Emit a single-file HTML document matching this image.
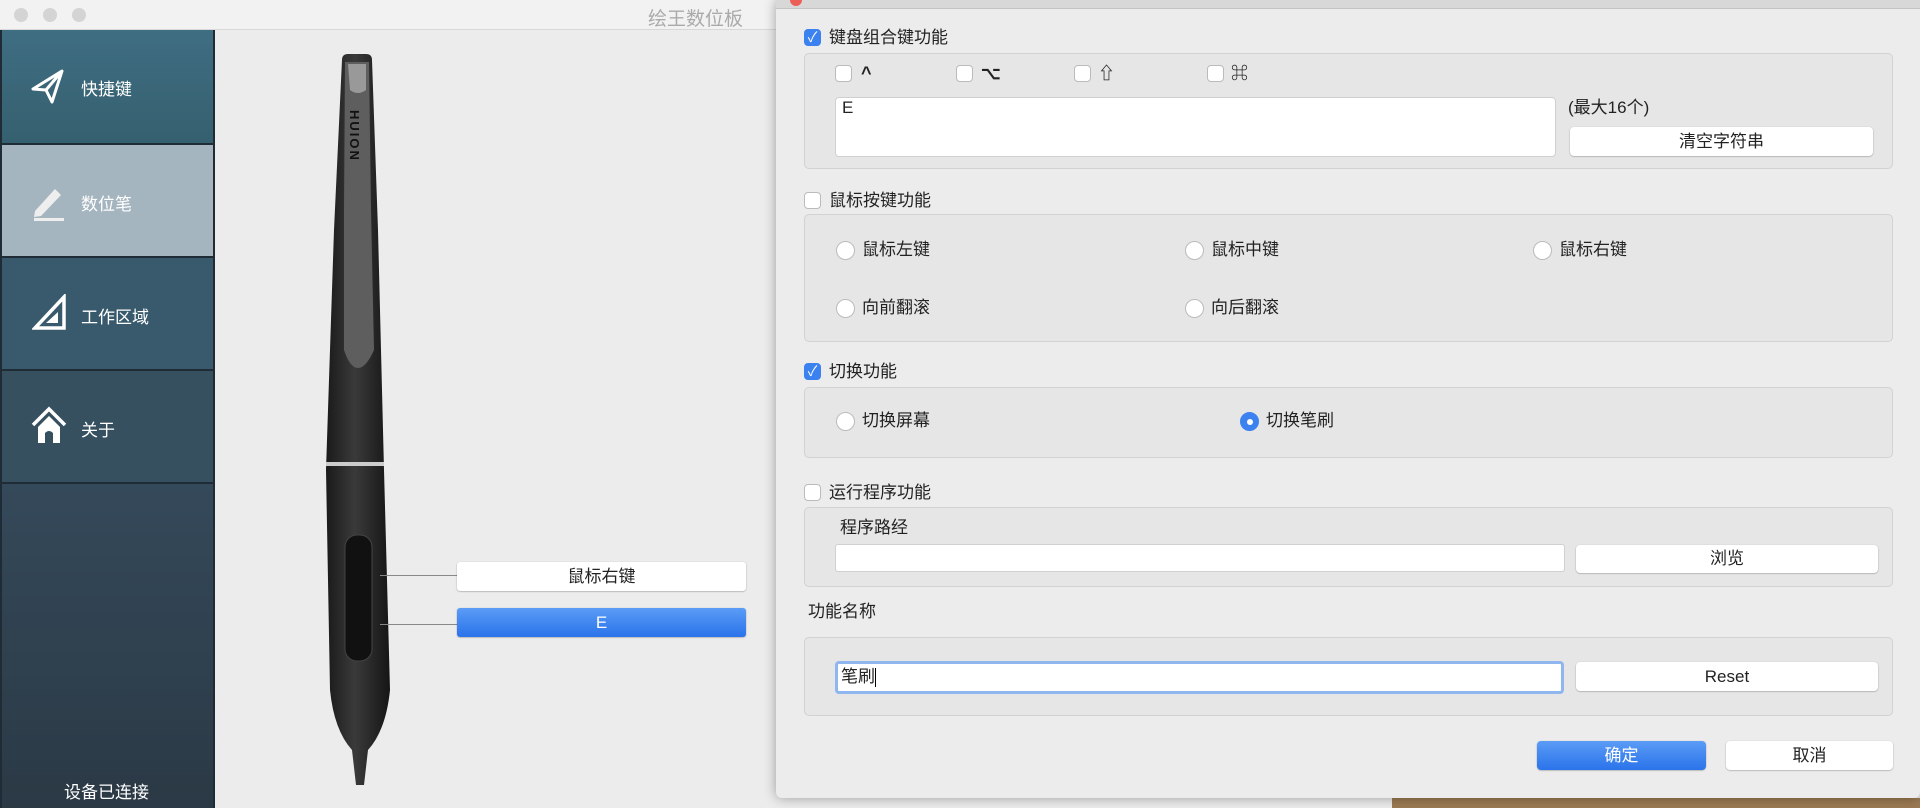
<!DOCTYPE html>
<html><head><meta charset="utf-8"><style>
*{margin:0;padding:0;box-sizing:border-box}
body{width:1920px;height:808px;overflow:hidden;background:#ececec;font-family:"Liberation Sans","Noto Sans CJK SC",sans-serif;position:relative}
.abs{position:absolute}
#left{left:0;top:0;width:780px;height:808px;background:#ececec}
#ltitle{left:0;top:0;width:780px;height:30px;background:#f2f2f2;border-bottom:1px solid #d8d8d8}
.tl{top:8px;width:14px;height:14px;border-radius:50%;background:#d4d4d4}
#side{left:0;top:30px;width:215px;height:778px;background:#1f2c36}
.item{position:absolute;left:2px;width:211px;color:#fff;font-size:17px}
.item span{position:absolute;left:79px}
#dlg{left:776px;top:0;width:1144px;height:798px;background:#ececec;box-shadow:0 0 12px rgba(0,0,0,.35);border-radius:0 0 6px 6px}
.t{position:absolute;font-size:17px;color:#222;white-space:nowrap;line-height:20px}
.cb{position:absolute;width:17px;height:17px;border:1px solid #bbb;border-radius:4px;background:#fff}
.cb.on{background:#3b82f0;border-color:#3b82f0;color:#fff;font-size:14px;line-height:15px;text-align:center}
.grp{position:absolute;border:1px solid #d2d2d2;border-radius:5px;background:#e6e6e6}
.rb{position:absolute;width:19px;height:19px;border-radius:50%;border:1px solid #bbb;background:#fff}
.rb.on{background:#3b82f0;border-color:#3b82f0}
.rb.on::after{content:"";position:absolute;left:6px;top:6px;width:6px;height:6px;border-radius:50%;background:#fff}
.inp{position:absolute;background:#fff;border:1px solid #d0d0d0}
.btn{position:absolute;background:#fff;border-radius:4px;box-shadow:0 0.5px 1.5px rgba(0,0,0,.35);font-size:17px;color:#222;text-align:center}
</style></head><body>
<div id="left" class="abs">
 <div id="ltitle" class="abs">
  <div class="tl abs" style="left:14px"></div><div class="tl abs" style="left:43px"></div><div class="tl abs" style="left:72px"></div>
  <div class="abs" style="left:648px;top:4px;font-size:19px;color:#aaa">绘王数位板</div>
 </div>
 <div id="side" class="abs">
  <div class="item" style="top:0;height:113px;background:linear-gradient(#3f6d82,#35606f)">
   <svg class="abs" style="left:28px;top:38px" width="36" height="36" viewBox="0 0 36 36"><path d="M32 3 L3 21 L16 22 L22 34 Z M16 22 L32 3" fill="none" stroke="#fff" stroke-width="3" stroke-linejoin="round"/></svg>
   <span style="top:45px">快捷键</span></div>
  <div class="item" style="top:115px;height:111px;background:#a5b5bf">
   <svg class="abs" style="left:29px;top:38px" width="36" height="38" viewBox="0 0 36 38"><path d="M4 28 L24 6 L30 12 L10 33 L3 34 Z" fill="#eee"/><rect x="3" y="35" width="30" height="3" fill="#eee"/></svg>
   <span style="top:45px">数位笔</span></div>
  <div class="item" style="top:228px;height:111px;background:#395a6c">
   <svg class="abs" style="left:30px;top:36px" width="36" height="38" viewBox="0 0 36 38"><path d="M32 3 L32 34 L3 34 Z" fill="none" stroke="#fff" stroke-width="3.5"/><path d="M26 18 L26 29 L14 29Z" fill="#fff"/></svg>
   <span style="top:45px">工作区域</span></div>
  <div class="item" style="top:341px;height:111px;background:#36505f">
   <svg class="abs" style="left:28px;top:34px" width="38" height="40" viewBox="0 0 38 40"><path d="M3 20 L19 4 L35 20" fill="none" stroke="#fff" stroke-width="3.5"/><path d="M8 22 L19 11 L30 22 L30 38 L23 38 L23 28 Q19 24 15 28 L15 38 L8 38Z" fill="#fff"/></svg>
   <span style="top:45px">关于</span></div>
  <div class="item" style="top:454px;height:324px;background:linear-gradient(#34495a,#2b3945)">
   <span style="left:62px;top:294px;font-size:17px">设备已连接</span></div>
 </div>
 <svg class="abs" style="left:320px;top:50px" width="80" height="740" viewBox="0 0 80 740">
  <defs><linearGradient id="pg" x1="0" x2="1"><stop offset="0" stop-color="#1a1a1a"/><stop offset=".45" stop-color="#3a3a3a"/><stop offset="1" stop-color="#151515"/></linearGradient></defs>
  <path d="M22 10 Q22 4 28 4 L46 4 Q52 4 52 10 L58 180 L64 420 L70 640 Q66 680 48 700 L44 735 L36 735 L32 700 Q14 680 10 640 L6 420 L14 180 Z" fill="url(#pg)"/>
  <path d="M25 12 L49 12 L51 160 L54 300 Q46 318 38 318 Q30 318 24 300 L24 160 Z" fill="#5e5e5e"/>
  <path d="M28 14 L46 14 L46 40 Q38 46 30 40 Z" fill="#999"/>
  <text x="30" y="60" transform="rotate(90 30 60)" font-size="13" font-weight="bold" fill="#111" letter-spacing="2">HUION</text>
  <rect x="6" y="412" width="58" height="4" fill="#ccc"/>
  <rect x="25" y="485" width="27" height="126" rx="12" fill="#111" stroke="#444"/>
 </svg>
 <div class="abs" style="left:380px;top:575px;width:77px;height:1px;background:#888"></div>
 <div class="abs" style="left:380px;top:624px;width:77px;height:1px;background:#888"></div>
 <div class="btn" style="left:457px;top:562px;width:289px;height:29px;line-height:29px;border-radius:3px">鼠标右键</div>
 <div class="btn" style="left:457px;top:608px;width:289px;height:29px;line-height:29px;border-radius:3px;background:linear-gradient(#5b9cf6,#2a73ea);color:#fff">E</div>
</div>

<div class="abs" style="left:1392px;top:798px;width:528px;height:10px;background:#9b7a52"></div>
<div id="dlg" class="abs">
 <div class="abs" style="left:0;top:0;width:1144px;height:9px;background:#d8d8d8;border-bottom:1px solid #c4c4c4"></div>
 <div class="abs" style="left:14px;top:-6px;width:12px;height:12px;border-radius:50%;background:#ec5f57"></div>

 <div class="cb on" style="left:28px;top:29px">✓</div><div class="t" style="left:53px;top:28px">键盘组合键功能</div>
 <div class="grp" style="left:28px;top:53px;width:1089px;height:116px"></div>
 <div class="cb" style="left:59px;top:65px"></div><div class="t" style="left:85px;top:63px;font-size:18px;font-weight:bold">^</div>
 <div class="cb" style="left:180px;top:65px"></div><div class="t" style="left:205px;top:64px;font-weight:bold">⌥</div>
 <div class="cb" style="left:298px;top:65px"></div><div class="t" style="left:322px;top:64px;font-weight:bold">⇧</div>
 <div class="cb" style="left:431px;top:65px"></div><div class="t" style="left:455px;top:64px;font-weight:bold">⌘</div>
 <div class="inp" style="left:59px;top:97px;width:721px;height:60px;border-radius:4px"></div>
 <div class="t" style="left:66px;top:98px">E</div>
 <div class="t" style="left:792px;top:98px">(最大16个)</div>
 <div class="btn" style="left:794px;top:127px;width:303px;height:29px;line-height:29px">清空字符串</div>

 <div class="cb" style="left:28px;top:192px"></div><div class="t" style="left:53px;top:191px">鼠标按键功能</div>
 <div class="grp" style="left:28px;top:214px;width:1089px;height:128px"></div>
 <div class="rb" style="left:60px;top:241px"></div><div class="t" style="left:86px;top:240px">鼠标左键</div>
 <div class="rb" style="left:409px;top:241px"></div><div class="t" style="left:435px;top:240px">鼠标中键</div>
 <div class="rb" style="left:757px;top:241px"></div><div class="t" style="left:783px;top:240px">鼠标右键</div>
 <div class="rb" style="left:60px;top:299px"></div><div class="t" style="left:86px;top:298px">向前翻滚</div>
 <div class="rb" style="left:409px;top:299px"></div><div class="t" style="left:435px;top:298px">向后翻滚</div>

 <div class="cb on" style="left:28px;top:363px">✓</div><div class="t" style="left:53px;top:362px">切换功能</div>
 <div class="grp" style="left:28px;top:387px;width:1089px;height:71px"></div>
 <div class="rb" style="left:60px;top:412px"></div><div class="t" style="left:86px;top:411px">切换屏幕</div>
 <div class="rb on" style="left:464px;top:412px"></div><div class="t" style="left:490px;top:411px">切换笔刷</div>

 <div class="cb" style="left:28px;top:484px"></div><div class="t" style="left:53px;top:483px">运行程序功能</div>
 <div class="grp" style="left:28px;top:507px;width:1089px;height:80px"></div>
 <div class="t" style="left:64px;top:518px">程序路经</div>
 <div class="inp" style="left:59px;top:544px;width:730px;height:28px;border-radius:3px"></div>
 <div class="btn" style="left:800px;top:545px;width:302px;height:28px;line-height:28px">浏览</div>

 <div class="t" style="left:32px;top:602px">功能名称</div>
 <div class="grp" style="left:28px;top:637px;width:1089px;height:79px"></div>
 <div class="inp" style="left:59px;top:661px;width:729px;height:33px;border:3px solid #8fb6ee;border-radius:4px"></div>
 <div class="t" style="left:65px;top:667px">笔刷<span style="display:inline-block;width:1px;height:19px;background:#000;vertical-align:middle"></span></div>
 <div class="btn" style="left:800px;top:662px;width:302px;height:29px;line-height:29px">Reset</div>

 <div class="btn" style="left:761px;top:741px;width:169px;height:29px;line-height:29px;background:linear-gradient(#5b9cf6,#2a73ea);color:#fff">确定</div>
 <div class="btn" style="left:950px;top:741px;width:167px;height:29px;line-height:29px">取消</div>
</div>
</body></html>
